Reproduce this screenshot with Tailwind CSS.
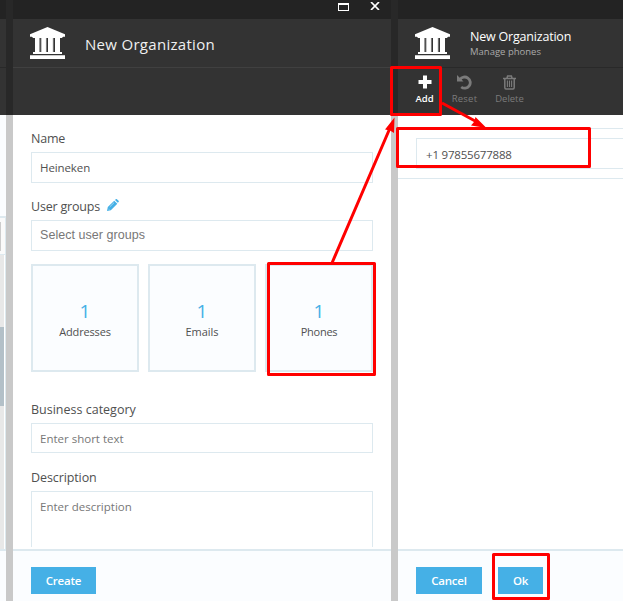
<!DOCTYPE html>
<html lang="en">
<head>
<meta charset="utf-8">
<title>New Organization</title>
<script src="https://cdn.jsdelivr.net/npm/@tailwindcss/browser@4"></script>
</head>
<body class="relative w-[623px] h-[601px] overflow-hidden bg-white font-['Open_Sans','Noto_Sans',sans-serif] text-[#505050]">
<svg class="hidden">
  <symbol id="bank" viewBox="0 0 35 33">
    <path fill="currentColor" d="M17.5 0 35 7.2V9.8H33.2L31.8 11H3.2L1.8 9.8H0V7.2ZM5 11H9.5V25H5ZM11.3 11H16V25H11.3ZM18 11H23V25H18ZM25 11H30V25H25ZM3 25H32V27H3ZM0 28.2H35V32H0Z"/>
    <path fill="#999" d="M9.3 11h1V25h-1zM15.9 11h.8V25h-.8zM22.8 11h.8V25h-.8z"/>
  </symbol>
</svg>
<div class="flex h-full">
  <!-- Edge of the panel behind -->
  <aside class="w-[6px] shrink-0 flex flex-col">
    <div class="h-[19px] bg-[#232323]"></div>
    <div class="h-[49px] bg-[#333] border-b border-[#292929]"></div>
    <div class="h-[47px] bg-[#333]"></div>
    <div class="h-[101px] bg-[#fbfdff]"></div>
    <div class="h-[39px] border-t-2 border-r border-b border-[#dde9ef] bg-[#fafafa] pt-1"><div class="w-px h-[29px] bg-[#ccc]"></div></div>
    <div class="h-[294px] border-r border-[#dde9ef]"><div class="w-1 h-full bg-[#e8e8e8] pt-[72px]"><div class="h-[79px] bg-[#b3c0c8]"></div></div></div>
    <div class="grow bg-[#fbfdff] border-t-2 border-[#dde9ef]"></div>
  </aside>
  <div class="w-[7px] shrink-0 bg-[#c9c9c9]"><div class="h-[115px] bg-[#282828]"></div></div>

  <!-- Organization panel -->
  <main class="w-[378px] shrink-0 flex flex-col">
    <div class="h-[19px] bg-[#232323] flex justify-end pr-[11px] text-white">
      <svg class="w-[11px] h-[8px] mt-[3px] mr-[21px]" viewBox="0 0 11 8"><path fill="currentColor" fill-rule="evenodd" d="M0 0H11V8H0ZM1 2V7H10V2Z"/></svg>
      <svg class="w-[10px] h-[8px] mt-[2px]" viewBox="0 0 10 8"><path d="M1 0 9 8M9 0 1 8" stroke="currentColor" stroke-width="1.7"/></svg>
    </div>
    <header class="h-[49px] bg-[#333] border-b border-[#404040] flex pl-[17px] text-white">
      <svg class="w-[35px] h-[33px] mt-2 shrink-0"><use href="#bank"/></svg>
      <h1 class="ml-5 mt-[13px] text-[15px] leading-6 tracking-[0.3px] text-[#f0f0f0] whitespace-nowrap">New Organization</h1>
    </header>
    <div class="h-[47px] bg-[#333] shrink-0"></div>
    <section class="h-[434px] px-[18px] overflow-hidden">
      <label class="block h-[37px] pt-[14px] text-[12.5px] leading-5 tracking-[-0.2px]">Name</label>
      <div class="h-[31px] border border-[#dde9ef] px-[8px] text-[11.5px] leading-[29px] tracking-[-0.1px]">Heineken</div>
      <label class="flex h-[37px] pt-[14px] text-[12.5px] leading-5 tracking-[-0.2px]">User groups
        <svg class="w-3 h-3 ml-[7px] mt-[2px]" viewBox="0 0 12 12" fill="#45b0e6"><path d="M7.2 1.7 10.3 4.8 3.8 11.2 0 12 .8 8.1ZM8 1 9 0Q9.6-.2 10.2.4L11.6 1.8Q12.1 2.4 11.6 3L10.8 3.8Z"/><path d="M2.8 7.8 7 3.7M1.4 9.8l.8.8" stroke="#fff" stroke-width=".5"/></svg>
      </label>
      <div class="h-[31px] border border-[#dde9ef] px-2 font-['Liberation_Sans',sans-serif] text-[12.5px] leading-[28px] tracking-[0.05px] text-[#777]">Select user groups</div>
      <div class="flex gap-[9px] mt-[13px]">
        <div class="size-[108px] border-2 border-[#dde9ef] bg-[#fbfdff] text-center pt-[31px]"><div class="text-[19px] leading-[28px] h-[26px] text-[#45b0e6]">1</div><div class="text-[11px] leading-[17px] tracking-[-0.15px]">Addresses</div></div>
        <div class="size-[108px] border-2 border-[#dde9ef] bg-[#fbfdff] text-center pt-[31px]"><div class="text-[19px] leading-[28px] h-[26px] text-[#45b0e6]">1</div><div class="text-[11px] leading-[17px]">Emails</div></div>
        <div class="size-[108px] border-2 border-[#dde9ef] bg-[#fbfdff] text-center pt-[31px]"><div class="text-[19px] leading-[28px] h-[26px] text-[#45b0e6]">1</div><div class="text-[11px] leading-[17px] tracking-[-0.25px]">Phones</div></div>
      </div>
      <label class="block mt-[28px] h-[23px] text-[12.5px] leading-5">Business category</label>
      <div class="h-[30px] border border-[#dde9ef] px-[8px] text-[11.5px] leading-[30px] text-[#777]">Enter short text</div>
      <label class="block h-[38px] pt-[15px] text-[12.5px] leading-5 tracking-[-0.1px]">Description</label>
      <div class="h-[56px] border border-b-0 border-[#dde9ef] px-[8px] text-[11.5px] leading-[30px] text-[#777]">Enter description</div>
    </section>
    <footer class="grow bg-[#fbfdff] border-t-2 border-[#dde9ef] pl-[18px] pt-4">
      <div class="w-[65px] h-[27px] bg-[#45b0e6] text-white text-center text-[11.5px] leading-[28px] tracking-[-0.2px] font-semibold">Create</div>
    </footer>
  </main>
  <div class="w-[7px] shrink-0 bg-[#c9c9c9]"><div class="h-[115px] bg-[#282828]"></div></div>

  <!-- Phones panel -->
  <div class="w-[225px] shrink-0 flex flex-col overflow-hidden">
    <div class="h-[19px] bg-[#232323]"></div>
    <header class="h-[49px] bg-[#333] border-b border-[#292929] flex pl-[17px] text-white">
      <svg class="w-[35px] h-[33px] mt-2 shrink-0"><use href="#bank"/></svg>
      <div class="ml-5 pt-[9px] whitespace-nowrap">
        <div class="text-[12.5px] leading-[17px] tracking-[-0.2px] font-medium">New Organization</div>
        <div class="text-[9.5px] leading-[13px] text-[#aaa]">Manage phones</div>
      </div>
    </header>
    <div class="h-[47px] bg-[#333] flex text-[9.5px] leading-[13px] text-[#7b7b7b] shrink-0">
      <div class="ml-[6px] w-[41px] flex flex-col items-center text-white font-semibold pt-[7px]">
        <svg class="w-[14px] h-[14px] mb-[3px]" viewBox="0 0 14 14"><path d="M7 .5V13.5M.5 7H13.5" stroke="currentColor" stroke-width="4"/></svg>Add</div>
      <div class="w-[39px] flex flex-col items-center pt-[7px] tracking-[0.2px]">
        <svg class="w-[15px] h-[15px] mb-[2px]" viewBox="0 0 15 15"><path d="M3 4.5A5.6 5.6 0 1 1 4.2 12" fill="none" stroke="currentColor" stroke-width="2.8"/><path d="M0 0V6.5H6.5Z" fill="currentColor"/></svg>Reset</div>
      <div class="w-[51px] flex flex-col items-center pt-[7px]">
        <svg class="w-[13px] h-[15px] mb-[2px]" viewBox="0 0 13 15" fill="none" stroke="currentColor"><path stroke-width="1.5" d="M0 3.5H13M1.8 3.5V12.5Q1.8 14 3 14H10Q11.2 14 11.2 12.5V3.5M4 3 4.6 1H8.4L9 3"/><path stroke-width="1.1" d="M4.4 5.5V12M6.5 5.5V12M8.6 5.5V12"/></svg>Delete</div>
    </div>
    <section class="h-[434px] pt-[13px]">
      <div class="h-[51px] border-y border-[#dde9ef] pt-[9px] pl-[18px]">
        <div class="h-[31px] border border-r-0 border-[#dde9ef] px-[9px] text-[11.5px] leading-[32px] tracking-[-0.2px]">+1 97855677888</div>
      </div>
    </section>
    <footer class="grow bg-[#fbfdff] border-t-2 border-[#dde9ef] pl-[18px] pt-4 flex gap-4 text-white text-center text-[11.5px] leading-[28px] tracking-[-0.2px] font-semibold">
      <div class="w-[66px] h-[27px] bg-[#45b0e6]">Cancel</div>
      <div class="w-[45px] h-[27px] bg-[#45b0e6]">Ok</div>
    </footer>
  </div>
</div>

<!-- Step annotations -->
<svg class="absolute inset-0 w-[623px] h-[601px]" viewBox="0 0 623 601" fill="none" stroke="#f00" stroke-width="3" stroke-linejoin="round">
  <path d="M391.5 67.5H440.5V114.5H391.5ZM397.500 128.500H589.500V166.500H397.500ZM268.500 263.500H374.500V374.500H268.500ZM493.500 554.500H548.500V598.500H493.500Z"/>
  <path d="M332 263 390 128M442 103 476 121.500"/>
  <path d="M394.500 117.500 394 133 390 130.500 385 129.500ZM486.500 128 471 125.500 474 122 475.500 117Z" fill="#f00" stroke="none"/>
</svg>
</body>
</html>
